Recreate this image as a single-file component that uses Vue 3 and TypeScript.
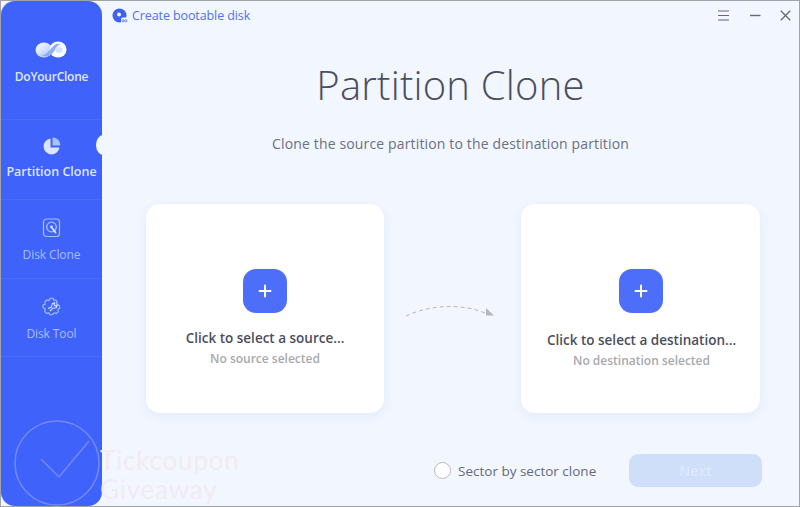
<script setup lang="ts">
interface NavItem {
  label: string;
  icon: 'pie' | 'disk' | 'tool';
  active?: boolean;
}

const navItems: NavItem[] = [
  { label: 'Partition Clone', icon: 'pie', active: true },
  { label: 'Disk Clone', icon: 'disk' },
  { label: 'Disk Tool', icon: 'tool' }
];

const cards = [
  { title: 'Click to select a source...', sub: 'No source selected', cls: 'source' },
  { title: 'Click to select a destination...', sub: 'No destination selected', cls: 'dest' }
];
</script>

<template>
  <div class="window">
    <aside class="sidebar">
      <div class="brand">
        <svg class="logo" width="34" height="22" viewBox="0 0 34 22">
          <defs>
            <linearGradient id="lg" x1="0" y1="0" x2="1" y2="1">
              <stop offset="0" stop-color="#ffffff" />
              <stop offset="1" stop-color="#a9c2fb" />
            </linearGradient>
          </defs>
          <path d="M9.5 2.5C4.8 2.5 1.5 6 1.500 10.500S5 19.500 10 19.500c4 0 6-2.500 8-5l3.500-4.500C23 8 24.500 6.500 26.500 6.500c2.300 0 3 2 3 4 0 2.500-1.500 5-4 5-1.500 0-2.500-.5-3.500-1.500l-3 3.800c1.800 1.400 4 2.200 6.500 2.200 4.500 0 7.500-4.500 7.500-9.500S29.500 1 25.500 1c-3.500 0-5.500 2-7.500 4.500l-3 3.800C13 11.500 12 12.500 10.500 12.500 9 12.500 8 11.500 8 10.500" fill="#fff" opacity="0" />
          <ellipse cx="10" cy="11" rx="8.500" ry="7.500" fill="url(#lg)" />
          <ellipse cx="24" cy="10.500" rx="8.500" ry="8" fill="#fff" />
          <path d="M6 15.500C11 17 14 13 17 9.500S22 4 27 5c-3 .5-4.500 3-6.500 6.500S14 20 6 15.500Z" fill="#8fb0f8" />
          <ellipse cx="25" cy="11" rx="3.500" ry="3" fill="#d5e2fd" />
        </svg>
        <div class="brand-name">DoYourClone</div>
      </div>

      <nav class="nav">
        <div v-for="item in navItems" :key="item.label" class="nav-item" :class="{ active: item.active }">
          <svg v-if="item.icon === 'pie'" class="nav-icon" width="20" height="20" viewBox="0 0 20 20">
            <path d="M8.500 2.500a8 8 0 1 0 9 9h-9Z" fill="#dbe5fe" />
            <path d="M10.500 1.500a8 8 0 0 1 8 8h-8Z" fill="#a8c0fb" />
          </svg>
          <svg v-else-if="item.icon === 'disk'" class="nav-icon" width="20" height="20" viewBox="0 0 20 20" fill="none" stroke="#a9bffc">
            <rect x="1.500" y="1" width="16" height="17.500" rx="3" stroke-width="1.200" />
            <circle cx="9.500" cy="9" r="4.800" stroke-width="1.300" />
            <circle cx="9.500" cy="9" r="1.400" fill="#dbe5fe" stroke="none" />
            <path d="M10.500 10.500l3 4" stroke="#dbe5fe" stroke-width="1.800" stroke-linecap="round" />
          </svg>
          <svg v-else class="nav-icon" width="20" height="20" viewBox="0 0 20 20" fill="none" stroke="#a9bffc" stroke-width="1.100" stroke-linejoin="round">
            <path d="M8.200 1.200h2.800l.8 2.200 2-.4 1.500 2.400-1 1.400 3 1.600.6 2.600-2 1.400.4 2.400-2.200 1.800-2-.8-1.800 2H7.800L7 15.800l-2.400.6-2-2 .6-2.400L1 10.500V8l2.200-.8L2.800 5l2-2 2.200.6Z" />
            <path d="M6 11.500l3.500-1.500 .8-3.500 2.500-.8-.8 2 1.200 1.200 2-.6-1 2.500-3.500.5L8 14" stroke="#dbe5fe" />
          </svg>
          <span class="nav-label">{{ item.label }}</span>
        </div>
      </nav>
      <span class="notch"></span>
    </aside>

    <main class="main">
      <header class="topbar">
        <div class="boot">
          <svg width="16" height="16" viewBox="0 0 16 16">
            <circle cx="7.500" cy="7.500" r="7" fill="#3f62e8" />
            <circle cx="7" cy="6.500" r="2" fill="#f1f6ff" />
            <rect x="9" y="9.500" width="7" height="6.500" rx="2" fill="#f1f6ff" />
            <circle cx="11" cy="12.800" r="1.100" fill="none" stroke="#3f62e8" stroke-width=".7" />
            <circle cx="13.800" cy="12.800" r="1.100" fill="none" stroke="#3f62e8" stroke-width=".7" />
          </svg>
          <span>Create bootable disk</span>
        </div>
        <div class="win-controls">
          <svg width="12" height="11" viewBox="0 0 12 11" stroke="#66687a" stroke-width="1.200">
            <path d="M0 1h11M0 5.500h11M0 10h11" />
          </svg>
          <svg width="12" height="11" viewBox="0 0 12 11" stroke="#66687a" stroke-width="1.400">
            <path d="M1 5.500h10.500" />
          </svg>
          <svg width="11" height="11" viewBox="0 0 11 11" stroke="#66687a" stroke-width="1.300">
            <path d="M.8.800l9.400 9.400M10.200.800L.8 10.200" />
          </svg>
        </div>
      </header>

      <h1 class="title">Partition Clone</h1>
      <p class="subtitle">Clone the source partition to the destination partition</p>

      <section class="cards">
        <div v-for="(card, i) in cards" :key="card.cls" class="card" :class="card.cls" :style="{ gridColumn: i * 2 + 1 }">
          <div class="plus">
            <svg width="14" height="14" viewBox="0 0 14 14" stroke="#fff" stroke-width="2" stroke-linecap="round">
              <path d="M7 1.500v11M1.500 7h11" />
            </svg>
          </div>
          <div class="card-text">
            <div class="card-title">{{ card.title }}</div>
            <div class="card-sub">{{ card.sub }}</div>
          </div>
        </div>
        <svg class="arrow" width="92" height="20" viewBox="0 0 92 20" fill="none">
          <path d="M1 14C24 3 56 1 80 11" stroke="#b4b7c2" stroke-width="1" stroke-dasharray="4 3" />
          <path d="M81 6l8 7.500H81Z" fill="#b4b7c2" />
        </svg>
      </section>

      <footer class="footer">
        <label class="sector"><span class="radio"></span>Sector by sector clone</label>
        <button class="next" type="button">Next</button>
      </footer>
    </main>

    <div class="watermark">
      <svg width="88" height="88" viewBox="0 0 88 88" fill="none" stroke="#f0e6f0" stroke-opacity=".3" stroke-width="1.500">
        <circle cx="44" cy="44" r="42" />
        <path d="M28 40l18 18 30-36" />
      </svg>
      <div class="wm-text">Tickcoupon<br />Giveaway</div>
    </div>
  </div>
</template>

<style scoped>
.window {
  position: relative;
  display: flex;
  box-sizing: border-box;
  width: 800px;
  height: 507px;
  border: 1px solid #a3a3a5;
  background: #f1f6ff;
  overflow: hidden;
  font-family: "Open Sans", "Noto Sans", sans-serif;
}

.sidebar {
  position: relative;
  flex: 0 0 101px;
  display: flex;
  flex-direction: column;
  align-items: center;
  background: #3f62fb;
  border-radius: 14px;
}

.brand {
  display: flex;
  flex-direction: column;
  align-items: center;
  width: 100%;
  height: 118px;
  padding-top: 38px;
  box-sizing: border-box;
}

.logo {
  margin-left: -1px;
}

.brand-name {
  margin-top: 7px;
  font-size: 12px;
  font-weight: 600;
  letter-spacing: -0.25px;
  color: #dfe8ff;
}

.nav {
  width: 100%;
}

.nav-item {
  display: flex;
  flex-direction: column;
  align-items: center;
  height: 79px;
  padding-top: 18px;
  box-sizing: border-box;
  border-top: 1px solid #4b6dfb;
  color: #a9bffc;
  font-size: 12px;
}

.nav-item:last-child {
  border-bottom: 1px solid #4b6dfb;
}

.nav-item:nth-child(1) {
  height: 80px;
  padding-top: 16px;
}

.nav-label {
  margin-top: 8px;
  white-space: nowrap;
  letter-spacing: -0.1px;
}

.nav-item.active .nav-label {
  margin-top: 7px;
  font-size: 12.5px;
  font-weight: 600;
  letter-spacing: 0;
  color: #dde6ff;
}

.notch {
  position: absolute;
  top: 134px;
  right: -8px;
  width: 14px;
  height: 20px;
  border-radius: 50%;
  background: #f1f6ff;
}

.main {
  flex: 1;
  display: flex;
  flex-direction: column;
  min-width: 0;
  padding: 0 0 0 44px;
}

.topbar {
  display: flex;
  align-items: center;
  justify-content: space-between;
  height: 29px;
  margin-left: -34px;
  padding-right: 8px;
}

.boot {
  display: flex;
  align-items: center;
  gap: 4px;
  font-size: 12.5px;
  letter-spacing: -0.1px;
  color: #5273ea;
}

.win-controls {
  display: flex;
  align-items: center;
  gap: 19px;
}

.title {
  margin: 28px 0 0 -44px;
  text-align: center;
  font-size: 40px;
  font-weight: 300;
  line-height: 54px;
  letter-spacing: 0.2px;
  color: #4c4e60;
  padding-left: 0;
}

.subtitle {
  margin: 22px 0 0 -44px;
  text-align: center;
  font-size: 14px;
  line-height: 20px;
  letter-spacing: 0.15px;
  color: #6d7082;
}

.cards {
  position: relative;
  display: grid;
  grid-template-columns: 238px 137px 239px;
  margin-top: 50px;
  height: 209px;
}

.card {
  position: relative;
  display: flex;
  flex-direction: column;
  align-items: center;
  padding-top: 65px;
  box-sizing: border-box;
  background: #fff;
  border-radius: 14px;
  box-shadow: 0 3px 10px rgba(120, 150, 230, 0.12);
}

.plus {
  display: flex;
  align-items: center;
  justify-content: center;
  width: 44px;
  height: 44px;
  border-radius: 13px;
  background: #4c6ef8;
}

.card-text {
  margin-top: 15px;
  text-align: center;
  white-space: nowrap;
}

.dest .card-text {
  margin-top: 17px;
  padding: 0 14px 4px;
  background: #fff;
  margin-right: -2px;
}

.card-title {
  font-size: 13.500px;
  font-weight: 600;
  line-height: 20px;
  color: #4c4e60;
}

.card-sub {
  margin-top: 3px;
  font-size: 12px;
  font-weight: 600;
  line-height: 16px;
  color: #a8a9ad;
}

.arrow {
  position: absolute;
  left: 259px;
  top: 98px;
}

.footer {
  display: flex;
  align-items: center;
  margin-top: 41px;
  padding-left: 288px;
  height: 33px;
}

.sector {
  display: flex;
  align-items: center;
  gap: 7px;
  width: 195px;
  font-size: 13.500px;
  color: #676a7c;
}

.radio {
  width: 15px;
  height: 15px;
  border: 1px solid #b9b9c2;
  border-radius: 50%;
  background: #fff;
}

.next {
  width: 133px;
  height: 33px;
  border: 0;
  border-radius: 9px;
  background: #d0dff9;
  color: #dde8fc;
  font-family: inherit;
  font-size: 14px;
  font-weight: 600;
}

.watermark {
  position: absolute;
  left: 12px;
  top: 418px;
  display: flex;
  pointer-events: none;
}

.wm-text {
  margin: 27px 0 0 -1px;
  font-family: Lato, sans-serif;
  font-size: 26px;
  line-height: 29px;
  letter-spacing: 0.8px;
  color: #f3ebf2;
}
</style>
